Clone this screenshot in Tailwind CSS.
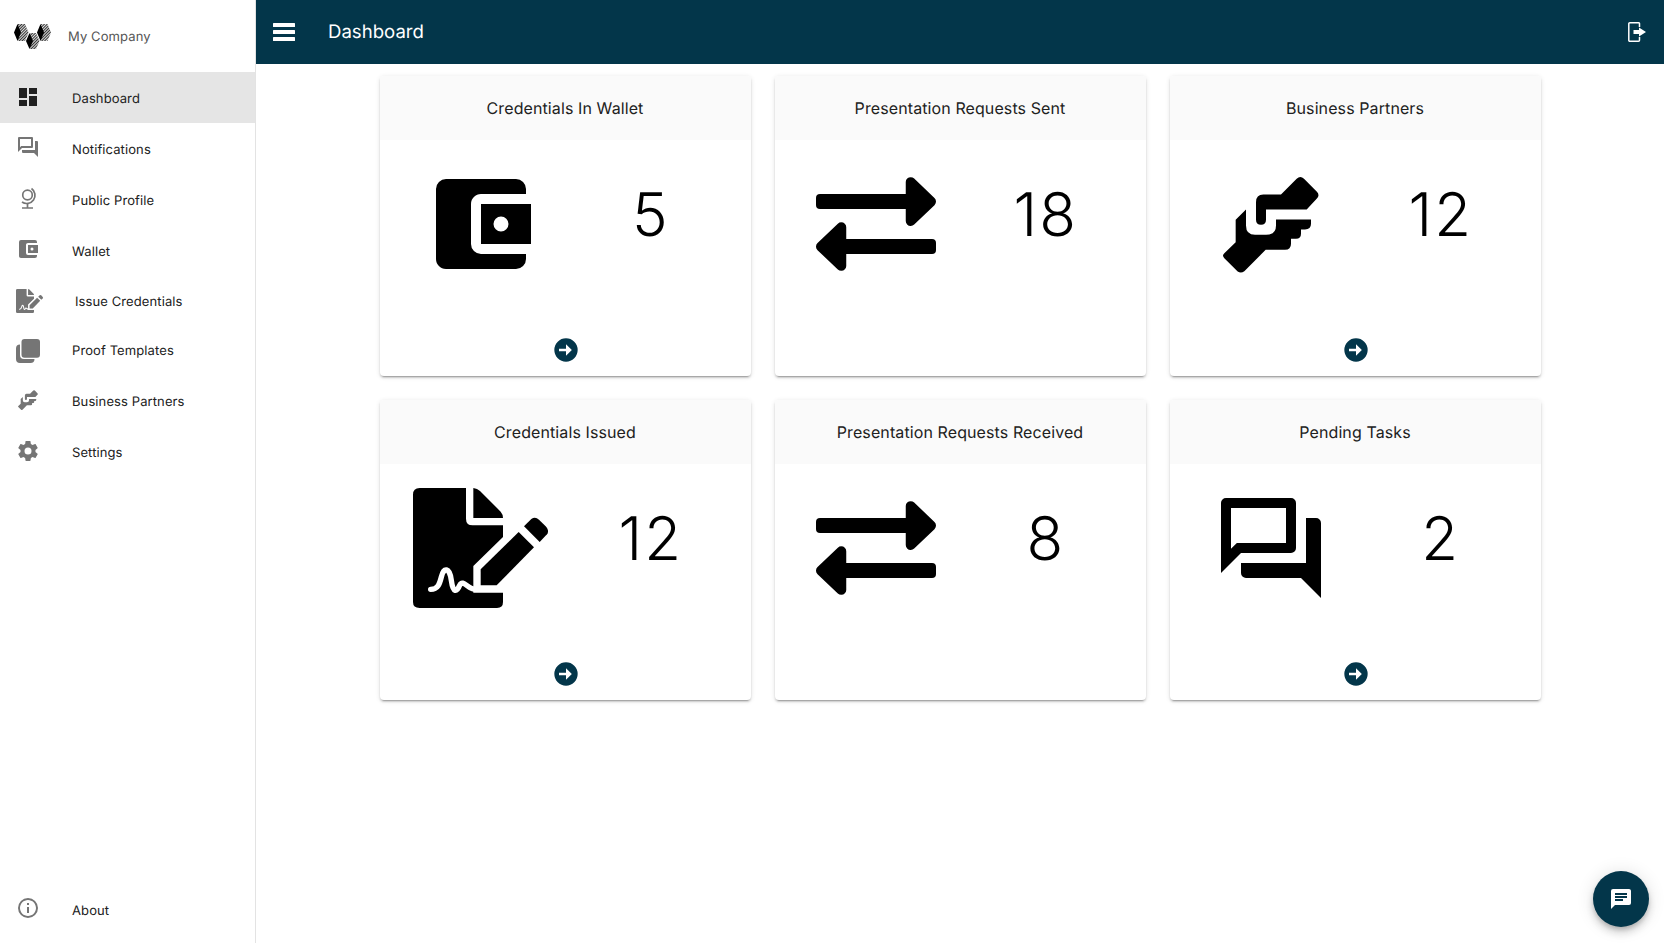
<!DOCTYPE html>
<html lang="en">
<head>
  <meta charset="UTF-8" />
  <title>Dashboard</title>
  <script src="https://cdn.jsdelivr.net/npm/@tailwindcss/browser@4"></script>
</head>
<body class="bg-white font-['Inter',sans-serif] text-[#212121] overflow-hidden [text-rendering:geometricPrecision]">

  <!-- shared icons -->
  <svg class="hidden">
    <symbol id="i-wallet" viewBox="0 0 24 24">
      <path fill="currentColor" d="M21,18V19A2,2 0 0,1 19,21H5C3.89,21 3,20.1 3,19V5A2,2 0 0,1 5,3H19A2,2 0 0,1 21,5V6H12C10.89,6 10,6.9 10,8V16A2,2 0 0,0 12,18M12,16H22V8H12M16,13.5A1.5,1.5 0 0,1 14.5,12A1.5,1.5 0 0,1 16,10.5A1.5,1.5 0 0,1 17.5,12A1.5,1.5 0 0,1 16,13.5Z" />
    </symbol>
    <symbol id="i-chat" viewBox="0 0 24 24">
      <path fill="currentColor" d="M15,4V11H5.17L4,12.17V4H15M16,2H3A1,1 0 0,0 2,3V17L6,13H16A1,1 0 0,0 17,12V3A1,1 0 0,0 16,2M21,6H19V15H6V17A1,1 0 0,0 7,18H18L22,22V7A1,1 0 0,0 21,6Z" />
    </symbol>
    <symbol id="i-doc" viewBox="130 293 405 360">
      <path fill="currentColor" d="M150 293H289V385Q289 405 309 405H400V440L311 527V607H400V635Q400 653 382 653H150Q130 653 130 635V313Q130 293 150 293Z" />
      <path fill="currentColor" d="M311 293Q323 294 331 302L393 364Q400 372 400 383H311Z" />
      <path fill="currentColor" d="M333 537L447 425L493 471L381 585H333Z" />
      <path fill="currentColor" d="M463 408L485 386Q497 378 508 388L528 408Q540 420 532 432L510 455Z" />
      <path fill="none" stroke="#fff" stroke-width="16" stroke-linecap="round" d="M183 597C205 597 210 580 215 560C222 530 240 530 245 570C250 610 262 605 270 585C280 565 295 597 318 597" />
    </symbol>
    <symbol id="i-transfer" viewBox="136 351 361 282">
      <rect x="136" y="402" width="290" height="45" rx="12" fill="currentColor" />
      <path fill="currentColor" stroke="currentColor" stroke-width="30" stroke-linejoin="round" d="M421 366L482 424.5L421 483Z" />
      <rect x="207" y="537" width="290" height="45" rx="12" fill="currentColor" />
      <path fill="currentColor" stroke="currentColor" stroke-width="30" stroke-linejoin="round" d="M212 502L151 560L212 618Z" />
    </symbol>
    <symbol id="i-hands" viewBox="174 347 288 290">
      <path fill="currentColor" d="M348 402L395 355Q406 344 417 355L455 393Q466 404 455 415L425 447H303V478Q303 493 288 493Q273 493 273 478V425Q273 402 295 402Z" />
      <path fill="currentColor" d="M243 447L212 478V545L178 578Q170 585 178 593L218 633Q228 640 238 632L302 568H360Q378 568 378 550V535H393Q408 535 408 520V507H420Q438 507 438 490V477H333V495Q333 523 303 523H270Q243 523 243 495Z" />
    </symbol>
    <symbol id="i-arrow" viewBox="0 0 24 24">
      <path fill="currentColor" d="M22,12A10,10 0 0,1 12,22A10,10 0 0,1 2,12A10,10 0 0,1 12,2A10,10 0 0,1 22,12M6,13H12V17L17,12L12,7V11H6V13Z" />
    </symbol>
  </svg>

  <div class="flex h-[943px] pr-[2px]">

    <!-- Sidebar -->
    <aside class="w-[256px] shrink-0 border-r border-[#e3e3e3] flex flex-col text-[13px] tracking-[0.1px]">
      <div class="h-[72px] flex items-center pl-[14px] pt-[1px]">
        <svg width="37" height="26" viewBox="14 24 37 26">
          <defs>
            <pattern id="hatch" width="2" height="2" patternUnits="userSpaceOnUse" patternTransform="rotate(45)">
              <rect width="2" height="2" fill="#ddd" />
              <rect width="1" height="2" fill="#333" />
            </pattern>
          </defs>
          <path fill="url(#hatch)" d="M18 24H25L28.500 32.500L25 41H18Z" />
          <path fill="url(#hatch)" d="M30 33H36L39.500 41L36 49H30Z" />
          <path fill="url(#hatch)" d="M41 24H47.500L51 32.500L47.500 41H41Z" />
          <path d="M17.500 24L21 32.500L17.500 41L14 32.500Z" />
          <path d="M29.500 33L33 41L29.500 49L26 41Z" />
          <path d="M40.500 24L44 32.500L40.500 41L37 32.500Z" />
        </svg>
        <span class="ml-[17px] mt-[2px] text-[#555]">My Company</span>
      </div>

      <nav class="flex flex-col">
        <a href="#" class="h-[51px] flex items-center pl-4 bg-[#e5e5e5]">
          <svg class="w-6 h-6 mr-8 -mt-[2px] text-[#212121]" viewBox="0 0 24 24"><path fill="currentColor" d="M13,3V9H21V3M13,21H21V11H13M3,21H11V15H3M3,13H11V3H3V13Z" /></svg>
          <span class="mt-1">Dashboard</span>
        </a>
        <a href="#" class="h-[51px] flex items-center pl-4">
          <svg class="w-6 h-6 mr-8 -mt-1 text-[#757575]"><use href="#i-chat" /></svg>
          <span class="mt-1">Notifications</span>
        </a>
        <a href="#" class="h-[51px] flex items-center pl-4">
          <svg class="w-6 h-6 mr-8 -mt-[2px] text-[#757575]" viewBox="0 0 24 24" fill="none" stroke="currentColor" stroke-width="1.700">
            <circle cx="11.500" cy="8" r="4.800" />
            <path d="M15.500 1.500A7.600 7.600 0 0 1 6 15" />
            <path d="M11.500 16V20.500M6 21H17" />
          </svg>
          <span class="mt-1">Public Profile</span>
        </a>
        <a href="#" class="h-[51px] flex items-center pl-4">
          <svg class="w-6 h-6 mr-8 -mt-1 text-[#757575]"><use href="#i-wallet" /></svg>
          <span class="mt-1">Wallet</span>
        </a>
        <a href="#" class="h-[50px] flex items-center pl-4">
          <svg class="w-[27px] h-6 mr-8 text-[#757575]"><use href="#i-doc" /></svg>
          <span class="mt-1">Issue Credentials</span>
        </a>
        <a href="#" class="h-[50px] flex items-center pl-4">
          <svg class="w-6 h-6 mr-8 text-[#757575]" viewBox="0 0 24 24">
            <rect x="5.500" y="0" width="18.500" height="18.700" rx="3" fill="currentColor" />
            <path fill="currentColor" d="M4 5.500A4 4 0 0 0 0 9.500V20A4 4 0 0 0 4 24H14.500A4 4 0 0 0 18.500 20H8A4 4 0 0 1 4 16Z" />
          </svg>
          <span class="mt-[2px]">Proof Templates</span>
        </a>
        <a href="#" class="h-[51px] flex items-center pl-4">
          <span class="w-6 h-6 mr-8 -mt-1 flex items-center justify-center text-[#757575]"><svg class="w-5 h-5"><use href="#i-hands" /></svg></span>
          <span class="mt-[2px]">Business Partners</span>
        </a>
        <a href="#" class="h-[51px] flex items-center pl-4">
          <svg class="w-6 h-6 mr-8 -mt-1 text-[#757575]" viewBox="0 0 24 24"><path fill="currentColor" d="M12,15.500A3.500,3.500 0 0,1 8.500,12A3.500,3.500 0 0,1 12,8.500A3.500,3.500 0 0,1 15.500,12A3.500,3.500 0 0,1 12,15.500M19.430,12.970C19.470,12.650 19.500,12.330 19.500,12C19.500,11.670 19.470,11.340 19.430,11L21.540,9.370C21.730,9.220 21.780,8.950 21.660,8.730L19.660,5.270C19.540,5.050 19.270,4.960 19.050,5.050L16.560,6.050C16.040,5.660 15.500,5.320 14.870,5.070L14.500,2.420C14.460,2.180 14.250,2 14,2H10C9.750,2 9.540,2.180 9.500,2.420L9.130,5.070C8.500,5.320 7.960,5.660 7.440,6.050L4.950,5.050C4.730,4.960 4.460,5.050 4.340,5.270L2.340,8.730C2.210,8.950 2.270,9.220 2.460,9.370L4.570,11C4.530,11.340 4.500,11.670 4.500,12C4.500,12.330 4.530,12.650 4.570,12.970L2.460,14.630C2.270,14.780 2.210,15.050 2.340,15.270L4.340,18.730C4.460,18.950 4.730,19.030 4.950,18.950L7.440,17.940C7.960,18.340 8.500,18.680 9.130,18.930L9.500,21.580C9.540,21.820 9.750,22 10,22H14C14.250,22 14.460,21.820 14.500,21.580L14.870,18.930C15.500,18.670 16.040,18.340 16.560,17.940L19.050,18.950C19.270,19.030 19.540,18.950 19.660,18.730L21.660,15.270C21.780,15.050 21.730,14.780 21.540,14.630L19.430,12.970Z" /></svg>
          <span class="mt-[2px]">Settings</span>
        </a>
      </nav>

      <a href="#" class="mt-auto mb-2 h-[51px] flex items-center pl-4">
        <svg class="w-6 h-6 mr-8 -mt-1 text-[#757575]" viewBox="0 0 24 24"><path fill="currentColor" d="M11,9H13V7H11M12,20C7.590,20 4,16.410 4,12C4,7.590 7.590,4 12,4C16.410,4 20,7.590 20,12C20,16.410 16.410,20 12,20M12,2A10,10 0 0,0 2,12A10,10 0 0,0 12,22A10,10 0 0,0 22,12A10,10 0 0,0 12,2M11,17H13V11H11V17Z" /></svg>
        <span class="mt-1">About</span>
      </a>
    </aside>

    <!-- Main -->
    <div class="flex-1 flex flex-col">
      <header class="h-16 bg-[#03364a] text-white flex items-center pl-[17px] pr-[18px]">
        <svg width="22" height="18" viewBox="0 0 22 18" fill="#fff">
          <rect width="22" height="4" rx="0.500" />
          <rect y="7" width="22" height="4" rx="0.500" />
          <rect y="14" width="22" height="4" rx="0.500" />
        </svg>
        <h1 class="ml-[33px] mt-[2px] text-[18.6px]">Dashboard</h1>
        <svg class="ml-auto" width="18" height="20" viewBox="0 0 18 20" fill="none" stroke="#fff" stroke-width="1.500">
          <path d="M11.500 5V1.500A1 1 0 0 0 10.500 .800H1.800A1 1 0 0 0 .800 1.800V18.200A1 1 0 0 0 1.800 19.200H10.500A1 1 0 0 0 11.500 18.200V15" />
          <path fill="#fff" stroke="none" d="M5.500 8H11V5.500L18 10L11 14.500V12H5.500Z" />
        </svg>
      </header>

      <main class="pt-3">
        <div class="w-[1161px] mx-auto grid grid-cols-3 gap-6">

          <div class="h-[300px] rounded bg-white shadow-[0_3px_1px_-2px_rgba(0,0,0,0.2),0_2px_2px_0_rgba(0,0,0,0.14),0_1px_5px_0_rgba(0,0,0,0.12)] flex flex-col">
            <div class="h-16 rounded-t bg-[#fafafa] flex items-center justify-center text-base tracking-[0.1px]">Credentials In Wallet</div>
            <div class="grid grid-cols-2 px-4 pt-6">
              <div class="h-[120px] pl-[2px] flex items-center justify-center text-black"><svg class="w-[120px] h-[120px]"><use href="#i-wallet" /></svg></div>
              <div class="text-center text-[60px] font-light leading-none tracking-[2px] text-black pt-[21px] pl-[2px]">5</div>
            </div>
            <div class="mt-auto pb-3 pl-[1px] flex justify-center text-[#03364a]"><svg class="w-7 h-7"><use href="#i-arrow" /></svg></div>
          </div>

          <div class="h-[300px] rounded bg-white shadow-[0_3px_1px_-2px_rgba(0,0,0,0.2),0_2px_2px_0_rgba(0,0,0,0.14),0_1px_5px_0_rgba(0,0,0,0.12)] flex flex-col">
            <div class="h-16 rounded-t bg-[#fafafa] flex items-center justify-center text-base tracking-[0.1px]">Presentation Requests Sent</div>
            <div class="grid grid-cols-2 px-4 pt-6">
              <div class="h-[120px] pl-[2px] flex items-center justify-center text-black"><svg class="w-[120px] h-[94px]"><use href="#i-transfer" /></svg></div>
              <div class="text-center text-[60px] font-light leading-none tracking-[2px] text-black pt-[21px] pl-[2px]">18</div>
            </div>
          </div>

          <div class="h-[300px] rounded bg-white shadow-[0_3px_1px_-2px_rgba(0,0,0,0.2),0_2px_2px_0_rgba(0,0,0,0.14),0_1px_5px_0_rgba(0,0,0,0.12)] flex flex-col">
            <div class="h-16 rounded-t bg-[#fafafa] flex items-center justify-center text-base tracking-[0.1px]">Business Partners</div>
            <div class="grid grid-cols-2 px-4 pt-6">
              <div class="h-[120px] pl-[2px] flex items-center justify-center text-black"><svg class="w-24 h-[97px]"><use href="#i-hands" /></svg></div>
              <div class="text-center text-[60px] font-light leading-none tracking-[2px] text-black pt-[21px] pl-[2px]">12</div>
            </div>
            <div class="mt-auto pb-3 pl-[1px] flex justify-center text-[#03364a]"><svg class="w-7 h-7"><use href="#i-arrow" /></svg></div>
          </div>

          <div class="h-[300px] rounded bg-white shadow-[0_3px_1px_-2px_rgba(0,0,0,0.2),0_2px_2px_0_rgba(0,0,0,0.14),0_1px_5px_0_rgba(0,0,0,0.12)] flex flex-col">
            <div class="h-16 rounded-t bg-[#fafafa] flex items-center justify-center text-base tracking-[0.1px]">Credentials Issued</div>
            <div class="grid grid-cols-2 px-4 pt-6">
              <div class="h-[120px] flex items-center justify-center text-black"><svg class="w-[135px] h-[120px] shrink-0"><use href="#i-doc" /></svg></div>
              <div class="text-center text-[60px] font-light leading-none tracking-[2px] text-black pt-[21px] pl-[2px]">12</div>
            </div>
            <div class="mt-auto pb-3 pl-[1px] flex justify-center text-[#03364a]"><svg class="w-7 h-7"><use href="#i-arrow" /></svg></div>
          </div>

          <div class="h-[300px] rounded bg-white shadow-[0_3px_1px_-2px_rgba(0,0,0,0.2),0_2px_2px_0_rgba(0,0,0,0.14),0_1px_5px_0_rgba(0,0,0,0.12)] flex flex-col">
            <div class="h-16 rounded-t bg-[#fafafa] flex items-center justify-center text-base tracking-[0.1px]">Presentation Requests Received</div>
            <div class="grid grid-cols-2 px-4 pt-6">
              <div class="h-[120px] pl-[2px] flex items-center justify-center text-black"><svg class="w-[120px] h-[94px]"><use href="#i-transfer" /></svg></div>
              <div class="text-center text-[60px] font-light leading-none tracking-[2px] text-black pt-[21px] pl-[2px]">8</div>
            </div>
          </div>

          <div class="h-[300px] rounded bg-white shadow-[0_3px_1px_-2px_rgba(0,0,0,0.2),0_2px_2px_0_rgba(0,0,0,0.14),0_1px_5px_0_rgba(0,0,0,0.12)] flex flex-col">
            <div class="h-16 rounded-t bg-[#fafafa] flex items-center justify-center text-base tracking-[0.1px]">Pending Tasks</div>
            <div class="grid grid-cols-2 px-4 pt-6">
              <div class="h-[120px] pl-[2px] flex items-center justify-center text-black"><svg class="w-[120px] h-[120px]"><use href="#i-chat" /></svg></div>
              <div class="text-center text-[60px] font-light leading-none tracking-[2px] text-black pt-[21px] pl-[2px]">2</div>
            </div>
            <div class="mt-auto pb-3 pl-[1px] flex justify-center text-[#03364a]"><svg class="w-7 h-7"><use href="#i-arrow" /></svg></div>
          </div>

        </div>
      </main>
    </div>
  </div>

  <!-- Chat button -->
  <button class="fixed right-[17px] bottom-4 w-14 h-14 rounded-full bg-[#03364a] text-white flex items-center justify-center shadow-[0_3px_5px_-1px_rgba(0,0,0,0.2),0_6px_10px_0_rgba(0,0,0,0.14),0_1px_18px_0_rgba(0,0,0,0.12)]">
    <svg class="w-6 h-6" viewBox="0 0 24 24"><path fill="currentColor" d="M20,2H4A2,2 0 0,0 2,4V22L6,18H20A2,2 0 0,0 22,16V4C22,2.890 21.100,2 20,2M6,9H18V11H6M14,14H6V12H14M18,8H6V6H18" /></svg>
  </button>
</body>
</html>
